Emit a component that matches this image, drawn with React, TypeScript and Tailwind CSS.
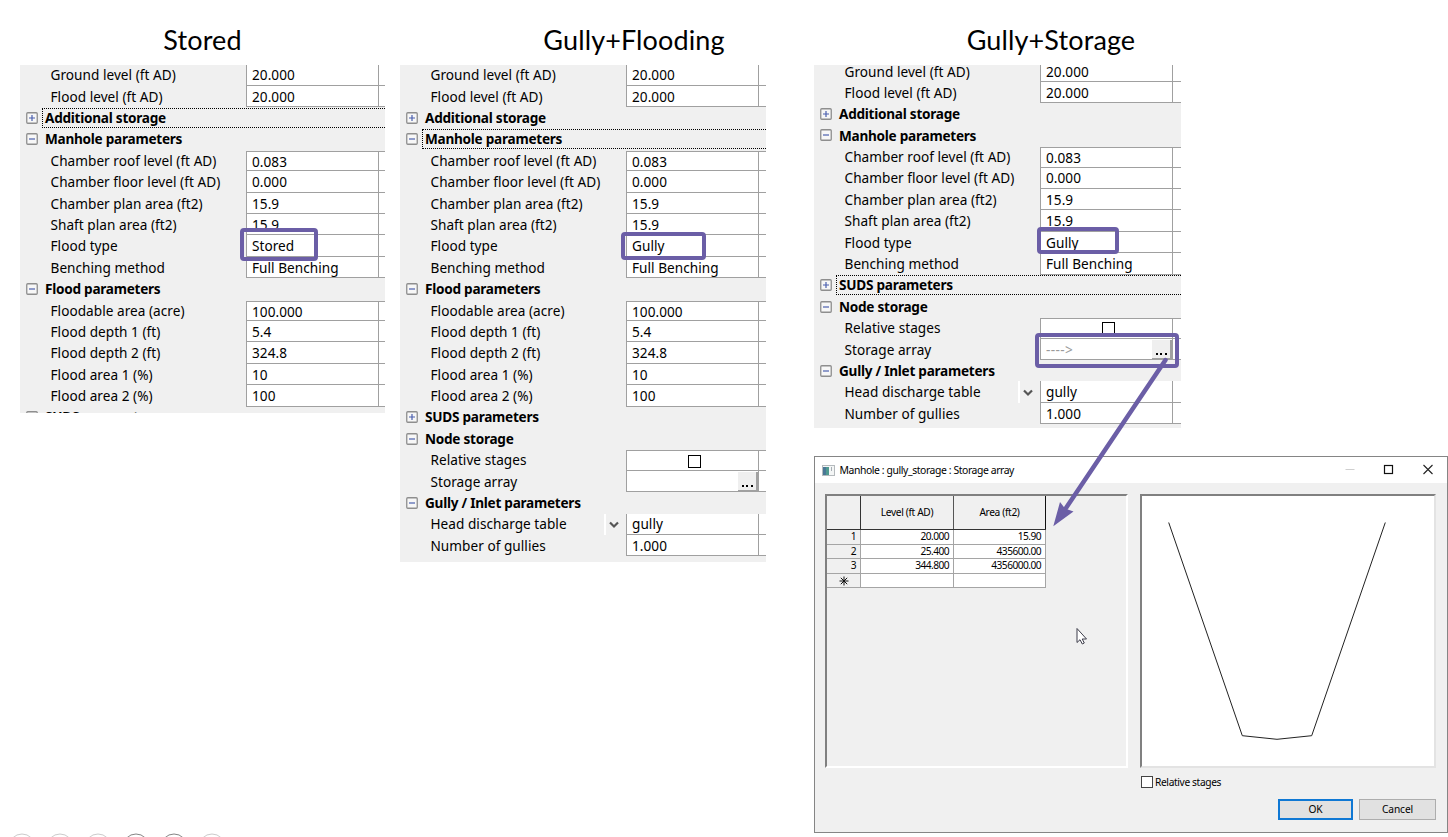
import React from "react";

type Row = {
  label: string;
  kind?: "plus" | "minus";
  value?: string;
  top?: boolean;
  focus?: boolean;
  control?: "check" | "dots" | "select";
  muted?: boolean;
};

const head = (label: string, kind: "plus" | "minus", focus = false): Row => ({ label, kind, focus });
const cell = (label: string, value: string, extra: Partial<Row> = {}): Row => ({ label, value, ...extra });

const levels: Row[] = [cell("Ground level (ft AD)", "20.000"), cell("Flood level (ft AD)", "20.000")];
const chamber = (type: string): Row[] => [
  cell("Chamber roof level (ft AD)", "0.083", { top: true }),
  cell("Chamber floor level (ft AD)", "0.000"),
  cell("Chamber plan area (ft2)", "15.9"),
  cell("Shaft plan area (ft2)", "15.9"),
  cell("Flood type", type),
  cell("Benching method", "Full Benching"),
];
const flood: Row[] = [
  head("Flood parameters", "minus"),
  cell("Floodable area (acre)", "100.000", { top: true }),
  cell("Flood depth 1 (ft)", "5.4"),
  cell("Flood depth 2 (ft)", "324.8"),
  cell("Flood area 1 (%)", "10"),
  cell("Flood area 2 (%)", "100"),
];
const inlet: Row[] = [
  head("Gully / Inlet parameters", "minus"),
  cell("Head discharge table", "gully", { control: "select" }),
  cell("Number of gullies", "1.000"),
];

const stored: Row[] = [
  ...levels,
  head("Additional storage", "plus", true),
  head("Manhole parameters", "minus"),
  ...chamber("Stored"),
  ...flood,
  head("SUDS parameters", "plus"),
];
const flooding: Row[] = [
  ...levels,
  head("Additional storage", "plus"),
  head("Manhole parameters", "minus", true),
  ...chamber("Gully"),
  ...flood,
  head("SUDS parameters", "plus"),
  head("Node storage", "minus"),
  cell("Relative stages", "", { top: true, control: "check" }),
  cell("Storage array", "", { control: "dots" }),
  ...inlet,
];
const storage: Row[] = [
  ...levels,
  head("Additional storage", "plus"),
  head("Manhole parameters", "minus"),
  ...chamber("Gully"),
  head("SUDS parameters", "plus", true),
  head("Node storage", "minus"),
  cell("Relative stages", "", { top: true, control: "check" }),
  cell("Storage array", "---->", { control: "dots", muted: true }),
  ...inlet,
];

function Expander({ kind }: { kind: "plus" | "minus" }) {
  return (
    <svg width="12" height="12" viewBox="0 0 12 12" className="shrink-0">
      <rect x="0.75" y="0.75" width="10.5" height="10.5" rx="1" fill="#f7f7f7" stroke="#8e8e8e" strokeWidth="1.3" />
      <path d={kind === "plus" ? "M3 6H9M6 3V9" : "M3 6H9"} stroke="#4a5fae" strokeWidth="1.2" />
    </svg>
  );
}

function PropertyRow({ row }: { row: Row }) {
  if (row.kind) {
    return (
      <div className="flex h-[21.4px] shrink-0 items-center pl-[6px]">
        <Expander kind={row.kind} />
        <div
          className={
            row.focus
              ? "ml-[4px] flex h-[20px] flex-1 items-center border-y border-l border-dotted border-black pl-[2px]"
              : "ml-[4px] flex h-[20px] flex-1 items-center pl-[3px]"
          }
        >
          <span className="text-[13.6px] leading-none font-bold tracking-[-0.26px] whitespace-nowrap">{row.label}</span>
        </div>
      </div>
    );
  }
  return (
    <div className="flex h-[21.4px] shrink-0">
      <div className="flex w-[225.5px] items-center justify-between pl-[30.5px]">
        <span className="text-[13.6px] leading-none tracking-[0.04px] whitespace-nowrap">{row.label}</span>
        {row.control === "select" && (
          <div className="flex h-full w-[22px] items-center border-l-2 border-white pt-[1px] pl-[3px]">
            <svg width="10" height="8" viewBox="0 0 10 8">
              <path d="M1 1.5L5 5.5L9 1.5" fill="none" stroke="#555" strokeWidth="2.2" />
            </svg>
          </div>
        )}
      </div>
      <div
        className={
          row.top
            ? "mt-[1px] flex flex-1 border-y border-l border-[#a0a0a0] bg-white"
            : "flex flex-1 border-b border-l border-[#a0a0a0] bg-white"
        }
      >
        <div className="flex w-[132.5px] items-center border-r border-[#a0a0a0] pt-[1px] pl-[5.5px] text-[13.6px] leading-none tracking-[0.04px] whitespace-nowrap">
          {row.control === "check" && <span className="ml-[55.5px] h-[13px] w-[13px] border-[1.5px] border-black bg-white" />}
          {row.value && <span className={row.muted ? "tracking-[0.4px] text-[#9a9a9a]" : ""}>{row.value}</span>}
          {row.control === "dots" && (
            <span className="ml-auto flex h-[19px] w-[20px] items-end justify-center gap-[2.5px] border-r-2 border-b border-[#a0a0a0] bg-[#efefef] pb-[3px]">
              <i className="h-[2px] w-[2px] bg-black" />
              <i className="h-[2px] w-[2px] bg-black" />
              <i className="h-[2px] w-[2px] bg-black" />
            </span>
          )}
        </div>
      </div>
    </div>
  );
}

function Highlight({ className }: { className: string }) {
  return <div className={"absolute rounded-[4px] border-4 border-[#6b5ea6] " + className} />;
}

function Title({ children, className }: { children: string; className: string }) {
  return (
    <h2
      className={
        "flex h-[65px] items-center justify-center pt-[16px] font-['Lato',sans-serif] text-[27px] tracking-[0.12px] " +
        className
      }
    >
      {children}
    </h2>
  );
}

function Panel({ rows, className, inner }: { rows: Row[]; className: string; inner: string }) {
  return (
    <div className={"overflow-hidden bg-[#f0f0f0] " + className}>
      <div className={"flex flex-col " + inner}>
        {rows.map((r, i) => (
          <PropertyRow key={i} row={r} />
        ))}
      </div>
    </div>
  );
}

const data = [
  ["1", "20.000", "15.90"],
  ["2", "25.400", "435600.00"],
  ["3", "344.800", "4356000.00"],
  ["", "", ""],
];

function Dialog() {
  return (
    <div className="mt-[28px] flex h-[377px] w-[634px] flex-col border border-[#858585] bg-[#f0f0f0] text-[10.2px] tracking-[-0.36px]">
      <div className="flex h-[26px] items-center bg-white pr-[13.5px] pl-[7px]">
        <svg width="13" height="11" viewBox="0 0 13 11">
          <rect x="0.5" y="0.5" width="12" height="10" fill="#f4f6f6" stroke="#b5babd" />
          <rect x="1" y="2" width="6" height="8" fill="#4f9a90" />
          <rect x="1" y="2" width="3" height="8" fill="#4a7796" />
          <path d="M9.5 2V6" stroke="#a8afb5" />
        </svg>
        <span className="ml-[4.5px] text-[10.4px] leading-none tracking-[-0.41px] whitespace-nowrap">
          Manhole : gully_storage : Storage array
        </span>
        <svg className="ml-auto" width="90" height="12" viewBox="0 0 90 12">
          <path d="M1.5 5.5H10.5" stroke="#cfcfcf" />
          <rect x="40.5" y="1.5" width="8" height="8" fill="none" stroke="#111" strokeWidth="1.2" />
          <path d="M79.5 1L88.5 10M88.5 1L79.5 10" stroke="#222" strokeWidth="1.1" />
        </svg>
      </div>
      <div className="mt-[11px] flex pl-[10px]">
        <div className="h-[274px] w-[303px] border-2 border-t-[#808080] border-r-white border-b-white border-l-[#808080]">
          <div className="flex h-[34px] w-[219px] border-b border-[#333] text-center">
            <div className="w-[34px] border-r border-[#333]" />
            <div className="flex w-[93px] items-center justify-center border-r border-[#555]">Level (ft AD)</div>
            <div className="flex w-[92px] items-center justify-center border-r border-[#111]">Area (ft2)</div>
          </div>
          {data.map((d, i) => (
            <div key={i} className="flex h-[14.6px] w-[219px] text-right leading-[13px] tracking-[-0.55px]">
              <div className="w-[34px] border-r border-b border-[#a5a5a5] pr-[4px]">
                {d[0] || (
                  <svg className="mt-[2px] ml-[12px]" width="10" height="10" viewBox="0 0 10 10">
                    <path d="M5 0.5V9.5M0.5 5H9.5M1.8 1.8L8.2 8.2M8.2 1.8L1.8 8.2" stroke="#111" />
                  </svg>
                )}
              </div>
              <div className="w-[93px] border-r border-b border-[#a5a5a5] bg-white pr-[4px]">{d[1]}</div>
              <div className="w-[92px] border-r border-b border-[#a5a5a5] bg-white pr-[4px]">{d[2]}</div>
            </div>
          ))}
        </div>
        <div className="ml-[12px] h-[274px] w-[296px] border-2 border-t-[#808080] border-r-[#e3e3e3] border-b-[#e3e3e3] border-l-[#808080] bg-white">
          <svg width="292" height="270" viewBox="1142 496 292 270">
            <path d="M1168.7 522.5L1242.3 735.7L1277 739.3L1311.7 735.7L1385.3 522.5" fill="none" stroke="#222" strokeWidth="1" />
          </svg>
        </div>
      </div>
      <div className="mt-[8px] flex items-center pl-[326px]">
        <span className="h-[12px] w-[12px] border border-[#444] bg-white" />
        <span className="ml-[2px] leading-[12px]">Relative stages</span>
      </div>
      <div className="mt-[11px] flex gap-[6px] pl-[463px] tracking-[-0.1px]">
        <div className="flex h-[21px] w-[75px] items-center justify-center border-2 border-[#0f78d4] bg-[#e1e1e1]">OK</div>
        <div className="flex h-[21px] w-[77px] items-center justify-center border border-[#adadad] bg-[#e1e1e1]">Cancel</div>
      </div>
    </div>
  );
}

export default function App() {
  return (
    <div className="relative flex h-[837px] w-[1448px] items-start overflow-hidden bg-white pl-[20px] font-['Noto_Sans','Open_Sans',sans-serif] text-black">
      <div className="w-[380px]">
        <Title className="w-[365px]">Stored</Title>
        <Panel rows={stored} className="h-[348px] w-[365px]" inner="mt-[-0.7px]" />
      </div>
      <div className="w-[414px]">
        <Title className="w-[468px]">Gully+Flooding</Title>
        <Panel rows={flooding} className="h-[497px] w-[366px]" inner="mt-[-0.7px]" />
      </div>
      <div className="w-[634px]">
        <Title className="w-[474px]">Gully+Storage</Title>
        <Panel rows={storage} className="h-[363px] w-[367px]" inner="mt-[-4.4px]" />
        <Dialog />
      </div>

      <Highlight className="top-[228px] left-[240px] h-[33px] w-[78px]" />
      <Highlight className="top-[232px] left-[621px] h-[28px] w-[85px]" />
      <Highlight className="top-[227px] left-[1037px] h-[27px] w-[82px]" />
      <Highlight className="top-[333px] left-[1035px] h-[35px] w-[144px]" />

      <svg className="absolute inset-0" width="1448" height="837" viewBox="0 0 1448 837">
        <path d="M1165.5 360L1066 508" stroke="#6b5ea6" strokeWidth="4.5" strokeLinecap="round" />
        <path d="M1053.3 526.3L1060 502L1065 508.5L1073.5 511.5Z" fill="#6b5ea6" />
        <path
          d="M1077 628.5V642.5L1080 639.7L1082.3 644L1084.3 643L1082.2 639H1086.5Z"
          fill="#fff"
          stroke="#3d3d4a"
          strokeWidth="1"
        />
        <g fill="none" stroke="#cbcbcb">
          <circle cx="22" cy="847" r="13" />
          <circle cx="60" cy="847" r="13" />
          <circle cx="98" cy="847" r="13" />
          <circle cx="136" cy="847" r="13" stroke="#858585" />
          <circle cx="174" cy="847" r="13" stroke="#858585" />
          <circle cx="212" cy="847" r="13" />
        </g>
      </svg>
    </div>
  );
}
